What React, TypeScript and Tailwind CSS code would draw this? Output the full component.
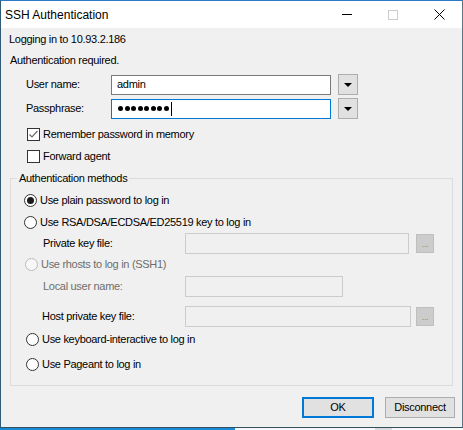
import type { ReactNode } from "react";

const font = "font-['Liberation_Sans',Arial,sans-serif]";

function Radio({ checked = false, disabled = false }: { checked?: boolean; disabled?: boolean }) {
  return (
    <span
      className={`flex h-[13px] w-[13px] shrink-0 items-center justify-center rounded-full border ${
        disabled ? "border-[#bcbcbc] bg-[#f7f7f7]" : "border-[#333333] bg-white"
      }`}
    >
      {checked && <span className="h-[7px] w-[7px] rounded-full bg-[#1a1a1a]" />}
    </span>
  );
}

function Checkbox({ checked = false }: { checked?: boolean }) {
  return (
    <span className="flex h-[13px] w-[13px] shrink-0 items-center justify-center border border-[#333333] bg-white">
      {checked && (
        <svg width="11" height="11" viewBox="0 0 11 11">
          <polyline points="1.5,5.5 4,8 9.5,2" fill="none" stroke="#6a6a6a" strokeWidth="1.2" />
        </svg>
      )}
    </span>
  );
}

function DropButton() {
  return (
    <span className="ml-[7px] flex h-[21px] w-[20px] items-center justify-center border border-[#adadad] bg-[#e1e1e1]">
      <svg width="8" height="4" viewBox="0 0 8 4">
        <polygon points="0,0 8,0 4,4" fill="#000" />
      </svg>
    </span>
  );
}

function BrowseButton({ gap }: { gap: string }) {
  return (
    <span
      className={`${gap} flex h-[19px] w-[18px] items-end justify-center border border-[#bfbfbf] bg-[#cccccc] pb-[3px] text-[9px] leading-none text-[#8a8a8a]`}
    >
      ...
    </span>
  );
}

function RadioRow({
  label,
  checked,
  disabled,
  pad,
  top,
}: {
  label: string;
  checked?: boolean;
  disabled?: boolean;
  pad: string;
  top: string;
}) {
  return (
    <div className={`flex h-[20px] items-center ${pad} ${top}`}>
      <Radio checked={checked} disabled={disabled} />
      <span className={`ml-[3px] ${disabled ? "text-[#6d6d6d]" : "text-black"}`}>{label}</span>
    </div>
  );
}

function FieldRow({ children, top, pad }: { children: ReactNode; top: string; pad: string }) {
  return <div className={`flex h-[21px] items-center ${pad} ${top}`}>{children}</div>;
}

export default function App() {
  return (
    <div className={`h-[430px] w-[463px] overflow-hidden bg-[#f0f0f0] ${font} text-[11px] tracking-[-0.3px] text-black`}>
      {/* window */}
      <div className="flex h-[428px] w-[463px] flex-col border-t border-r border-b border-l border-t-[#2b79c2] border-r-[#5f7584] border-b-[#34505f] border-l-[#2f5a78] bg-[#f0f0f0]">
        {/* title bar */}
        <div className="flex h-[27px] shrink-0 items-center bg-white">
          <span className="pl-[4px] text-[12px] tracking-normal">SSH Authentication</span>
          <div className="ml-auto flex h-full items-center">
            <span className="flex w-[46px] items-center justify-center">
              <span className="h-px w-[10px] bg-black" />
            </span>
            <span className="flex w-[46px] items-center justify-center">
              <span className="h-[10px] w-[10px] border border-[#cccccc]" />
            </span>
            <span className="flex w-[46px] items-center justify-center">
              <svg width="11" height="11" viewBox="0 0 11 11">
                <path d="M0.5 0.5 L10.5 10.5 M10.5 0.5 L0.5 10.5" stroke="#000" strokeWidth="1" />
              </svg>
            </span>
          </div>
        </div>

        {/* body */}
        <div className="mt-[1px] flex h-[21px] items-center pl-[8px]">Logging in to 10.93.2.186</div>
        <div className="flex h-[21px] items-center pl-[9px]">Authentication required.</div>

        <div className="mt-[3px] flex h-[21px] items-center pl-[25px]">
          <span className="w-[85px]">User name:</span>
          <span className="flex h-[20px] w-[220px] items-center border border-[#7a7a7a] bg-white pl-[5px]">admin</span>
          <DropButton />
        </div>
        <div className="mt-[3px] flex h-[21px] items-center pl-[25px]">
          <span className="w-[85px]">Passphrase:</span>
          <span className="flex h-[20px] w-[220px] items-center border border-[#0078d7] bg-white pl-[6px]">
            <span className="flex items-center gap-[1.5px]">
              {[0, 1, 2, 3, 4, 5, 6, 7].map((i) => (
                <span key={i} className="h-[5px] w-[5px] rounded-full bg-black" />
              ))}
            </span>
            <span className="ml-[2px] h-[14px] w-px bg-black" />
          </span>
          <DropButton />
        </div>

        <div className="mt-[5px] flex h-[20px] items-center pl-[26px]">
          <Checkbox checked />
          <span className="ml-[3px]">Remember password in memory</span>
        </div>
        <div className="mt-[2px] flex h-[21px] items-center pl-[26px]">
          <Checkbox />
          <span className="ml-[3px]">Forward agent</span>
        </div>

        {/* group box */}
        <div className="relative mt-[11px] ml-[9px] h-[208px] w-[443px] shrink-0 border border-[#dcdcdc]">
          <span className="absolute -top-[8px] left-[6px] bg-[#f0f0f0] px-[2px] leading-[14px]">
            Authentication methods
          </span>
          <RadioRow label="Use plain password to log in" checked pad="pl-[13px]" top="mt-[11px]" />
          <RadioRow label="Use RSA/DSA/ECDSA/ED25519 key to log in" pad="pl-[13px]" top="mt-[2px]" />
          <FieldRow pad="pl-[32px]" top="mt-[1px]">
            <span className="w-[142px]">Private key file:</span>
            <span className="h-[21px] w-[224px] border border-[#cccccc] bg-[#f0f0f0]" />
            <BrowseButton gap="ml-[7px]" />
          </FieldRow>
          <RadioRow label="Use rhosts to log in (SSH1)" disabled pad="pl-[14px]" top="mt-0" />
          <FieldRow pad="pl-[32px]" top="mt-[2px]">
            <span className="w-[142px] text-[#6d6d6d]">Local user name:</span>
            <span className="h-[21px] w-[158px] border border-[#cccccc] bg-[#f0f0f0]" />
          </FieldRow>
          <FieldRow pad="pl-[31px]" top="mt-[9px]">
            <span className="w-[143px]">Host private key file:</span>
            <span className="h-[21px] w-[226px] border border-[#cccccc] bg-[#f0f0f0]" />
            <BrowseButton gap="ml-[5px]" />
          </FieldRow>
          <RadioRow label="Use keyboard-interactive to log in" pad="pl-[15px]" top="mt-[2px]" />
          <RadioRow label="Use Pageant to log in" pad="pl-[15px]" top="mt-[5px]" />
        </div>

        {/* buttons */}
        <div className="mt-[11px] flex justify-end gap-[11px] pr-[7px]">
          <button className="flex h-[21px] w-[72px] items-center justify-center border-2 border-[#0078d7] bg-[#e1e1e1]">
            OK
          </button>
          <button className="flex h-[21px] w-[70px] items-center justify-center border border-[#adadad] bg-[#e1e1e1]">
            Disconnect
          </button>
        </div>
      </div>

      {/* desktop strip below window */}
      <div className="flex h-[2px]">
        <span className="w-[235px] bg-[#1a8ad4]" />
        <span className="w-[140px] bg-[#f7f7f7]" />
        <span className="w-[17px] bg-[#d9d9d9]" />
        <span className="flex-1 bg-[#f7f7f7]" />
      </div>
    </div>
  );
}
